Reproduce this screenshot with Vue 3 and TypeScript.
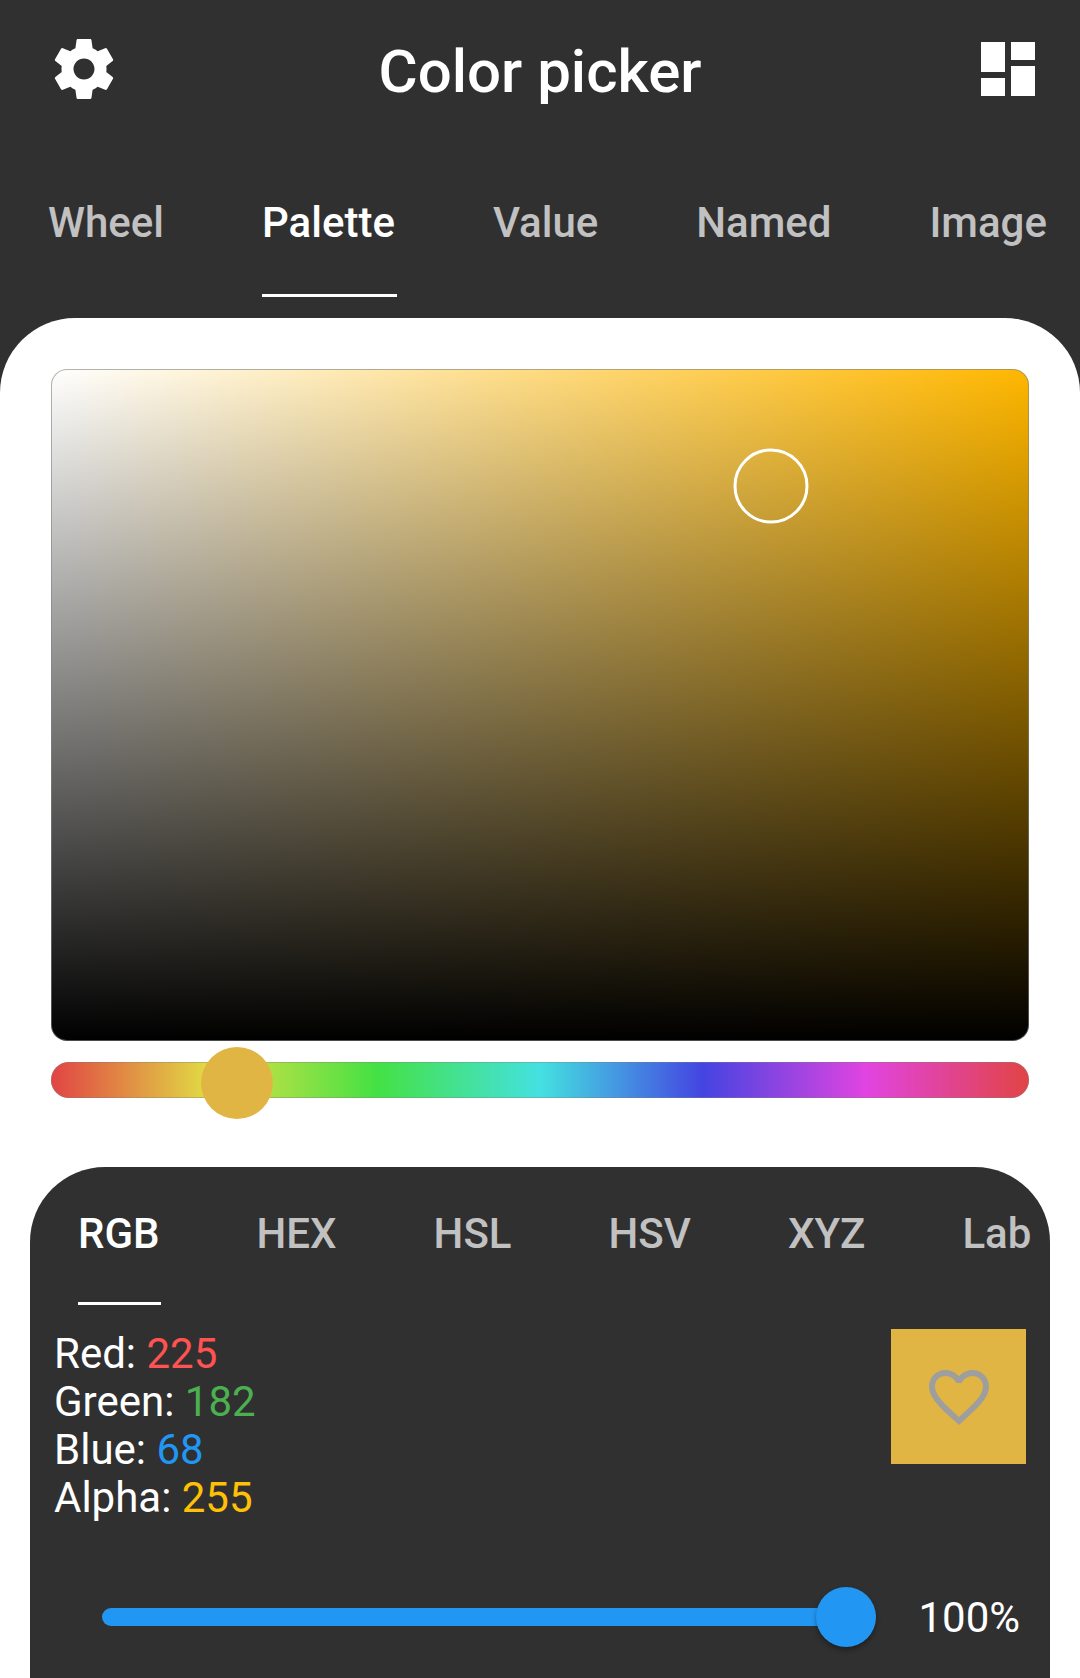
<script setup lang="ts">
import { computed, ref } from 'vue'

const pickers: string[] = ['Wheel', 'Palette', 'Value', 'Named', 'Image']
const models: string[] = ['RGB', 'HEX', 'HSL', 'HSV', 'XYZ', 'Lab']
const activePicker = ref('Palette')
const activeModel = ref('RGB')

interface Channel {
  name: string
  value: number
  tone: string
}

const channels: Channel[] = [
  { name: 'Red', value: 225, tone: 'red' },
  { name: 'Green', value: 182, tone: 'green' },
  { name: 'Blue', value: 68, tone: 'blue' },
  { name: 'Alpha', value: 255, tone: 'amber' },
]

const hue = ref(59.6)
const opacity = ref(100)
const marker = ref({ x: 73.7, y: 17.3 })
const markerStyle = computed(() => ({ left: `${marker.value.x}%`, top: `${marker.value.y}%` }))
const fillStyle = computed(() => ({ '--fill': `${opacity.value}%` }))

function moveMarker(event: MouseEvent): void {
  const box = (event.currentTarget as HTMLElement).getBoundingClientRect()
  marker.value = {
    x: ((event.clientX - box.left) / box.width) * 100,
    y: ((event.clientY - box.top) / box.height) * 100,
  }
}
</script>

<template>
  <div class="app">
    <header class="bar">
      <button class="icon-button" type="button" aria-label="Settings">
        <svg viewBox="0 0 24 24" aria-hidden="true">
          <path d="M19.43 12.98c.04-.32.07-.64.07-.98s-.03-.66-.07-.98l2.11-1.65c.19-.15.24-.42.12-.64l-2-3.46c-.12-.22-.39-.3-.61-.22l-2.49 1c-.52-.4-1.08-.73-1.69-.98l-.38-2.65C14.46 2.18 14.25 2 14 2h-4c-.25 0-.46.18-.49.42l-.38 2.65c-.61.25-1.17.59-1.69.98l-2.49-1c-.23-.09-.49 0-.61.22l-2 3.46c-.13.22-.07.49.12.64l2.11 1.65c-.04.32-.07.65-.07.98s.03.66.07.98l-2.11 1.65c-.19.15-.24.42-.12.64l2 3.46c.12.22.39.3.61.22l2.49-1c.52.4 1.08.73 1.69.98l.38 2.65c.03.24.24.42.49.42h4c.25 0 .46-.18.49-.42l.38-2.65c.61-.25 1.17-.59 1.69-.98l2.49 1c.23.09.49 0 .61-.22l2-3.46c.12-.22.07-.49-.12-.64l-2.11-1.65zM12 15.5c-1.93 0-3.5-1.57-3.5-3.5s1.57-3.5 3.5-3.5 3.5 1.57 3.5 3.5-1.57 3.5-3.5 3.5z" />
        </svg>
      </button>
      <h1>Color picker</h1>
      <button class="icon-button" type="button" aria-label="Dashboard">
        <svg viewBox="0 0 24 24" aria-hidden="true">
          <path d="M3 13h8V3H3v10zm0 8h8v-6H3v6zm10 0h8V11h-8v10zm0-18v6h8V3h-8z" />
        </svg>
      </button>
    </header>

    <nav class="tabs" aria-label="Picker">
      <button
        v-for="name in pickers"
        :key="name"
        type="button"
        class="tab"
        :class="{ active: name === activePicker }"
        @click="activePicker = name"
      >
        <span>{{ name }}</span>
      </button>
    </nav>

    <main class="sheet">
      <div class="palette" @click="moveMarker">
        <span class="marker" :style="markerStyle"></span>
      </div>
      <input v-model.number="hue" class="hue" type="range" min="0" max="360" step="0.1" aria-label="Hue" />

      <section class="panel">
        <nav class="tabs model-tabs" aria-label="Color model">
          <button
            v-for="name in models"
            :key="name"
            type="button"
            class="tab"
            :class="{ active: name === activeModel }"
            @click="activeModel = name"
          >
            <span>{{ name }}</span>
          </button>
        </nav>

        <div class="details">
          <ul class="channels">
            <li v-for="channel in channels" :key="channel.name">
              {{ channel.name }}: <span :class="channel.tone">{{ channel.value }}</span>
            </li>
          </ul>
          <button class="swatch" type="button" aria-label="Add to favorites">
            <svg viewBox="0 0 24 24" aria-hidden="true">
              <path d="M16.5 3c-1.74 0-3.41.81-4.5 2.09C10.91 3.81 9.24 3 7.5 3 4.42 3 2 5.42 2 8.5c0 3.78 3.4 6.86 8.55 11.54L12 21.35l1.45-1.32C18.6 15.36 22 12.28 22 8.5 22 5.42 19.58 3 16.5 3zm-4.4 15.55l-.1.1-.1-.1C7.14 14.24 4 11.39 4 8.5 4 6.5 5.5 5 7.5 5c1.54 0 3.04.99 3.57 2.36h1.87C13.46 5.99 14.96 5 16.5 5c2 0 3.5 1.5 3.5 3.5 0 2.89-3.14 5.74-7.9 10.05z" />
            </svg>
          </button>
        </div>

        <div class="opacity">
          <input
            id="opacity"
            v-model.number="opacity"
            class="slider"
            :style="fillStyle"
            type="range"
            min="0"
            max="100"
            aria-label="Opacity"
          />
          <output for="opacity">{{ opacity }}%</output>
        </div>
      </section>
    </main>
  </div>
</template>

<style>
body {
  margin: 0;
  background: #303030;
}
</style>

<style scoped>
.app {
  display: flex;
  flex-direction: column;
  min-height: 100vh;
  overflow: hidden;
  background: #303030;
  color: #fff;
  font-family: Roboto, "Liberation Sans", sans-serif;
  font-size: 42px;
  line-height: 48px;
}

button {
  margin: 0;
  padding: 0;
  border: 0;
  background: none;
  color: inherit;
  font: inherit;
  cursor: pointer;
}

svg {
  display: block;
  width: 72px;
  height: 72px;
  fill: currentColor;
}

.bar {
  display: grid;
  grid-template-columns: 1fr auto 1fr;
  align-items: center;
  height: 138px;
}

.icon-button {
  justify-self: start;
  margin: 0 36px 0 48px;
}

.icon-button:last-child {
  justify-self: end;
}

h1 {
  margin: 0;
  padding-top: 6px;
  font-size: 60px;
  line-height: 72px;
  font-weight: 500;
}

.tabs {
  display: flex;
  overflow: hidden;
  padding-top: 61px;
}

.tab {
  flex: none;
  padding: 0 48px;
  color: #c1c1c1;
  font-weight: 500;
}

.tab span {
  display: block;
  padding: 0 2px 47px 0;
  border-bottom: 3px solid transparent;
}

.tab.active {
  color: #fff;
}

.tab.active span {
  border-color: #fff;
}

.sheet {
  display: flex;
  flex: 1;
  flex-direction: column;
  margin-top: 21px;
  padding: 51px 30px 0;
  border-radius: 75px 75px 0 0;
  background: #fff;
}

.palette {
  position: relative;
  height: 672px;
  margin: 0 21px;
  box-sizing: border-box;
  border: 1px solid rgba(128, 128, 128, 0.6);
  border-radius: 16px;
  background:
    linear-gradient(to top, #000, transparent) border-box,
    linear-gradient(to right, #fff, #ffb700) border-box;
}

.marker {
  position: absolute;
  box-sizing: border-box;
  width: 75px;
  height: 75px;
  border: 3px solid #fff;
  border-radius: 50%;
  transform: translate(-50%, -50%);
}

.hue {
  appearance: none;
  height: 36px;
  margin: 21px 21px 0;
  border-radius: 18px;
  background: linear-gradient(to right, #e14444, #e1e144, #44e144, #44e1e1, #4444e1, #e144e1, #e14444);
  box-shadow: inset 0 0 0 1px rgba(128, 128, 128, 0.4);
}

.hue::-webkit-slider-runnable-track {
  height: 36px;
}

.hue::-webkit-slider-thumb {
  appearance: none;
  width: 72px;
  height: 72px;
  margin-top: -15px;
  border-radius: 50%;
  background: #e1b544;
}

.panel {
  flex: 1;
  margin-top: 69px;
  border-radius: 75px 75px 0 0;
  background: #303030;
}

.model-tabs {
  padding-top: 43px;
}

.model-tabs .tab span {
  padding: 0 1px 44px 0;
}

.details {
  display: flex;
  align-items: flex-start;
  justify-content: space-between;
  padding: 24px 24px 0;
}

.channels {
  margin: 0;
  padding: 1px 0 0;
  list-style: none;
}

.red {
  color: #ff5252;
}

.green {
  color: #4caf50;
}

.blue {
  color: #2196f3;
}

.amber {
  color: #ffc107;
}

.swatch {
  display: flex;
  align-items: center;
  justify-content: center;
  width: 135px;
  height: 135px;
  background: #e1b544;
  color: #9e9e9e;
}

.opacity {
  display: flex;
  align-items: center;
  gap: 42px;
  padding: 65px 30px 31px 72px;
}

.opacity output {
  padding-top: 2px;
}

.slider {
  appearance: none;
  flex: 1;
  min-width: 0;
  height: 60px;
  margin: 0;
  background: none;
}

.slider::-webkit-slider-runnable-track {
  height: 18px;
  border-radius: 9px;
  background: linear-gradient(to right, #2196f3 var(--fill), #26567d var(--fill));
}

.slider::-webkit-slider-thumb {
  appearance: none;
  width: 60px;
  height: 60px;
  margin-top: -21px;
  border-radius: 50%;
  background: #2196f3;
  box-shadow: 0 3px 5px rgba(0, 0, 0, 0.35);
}
</style>
